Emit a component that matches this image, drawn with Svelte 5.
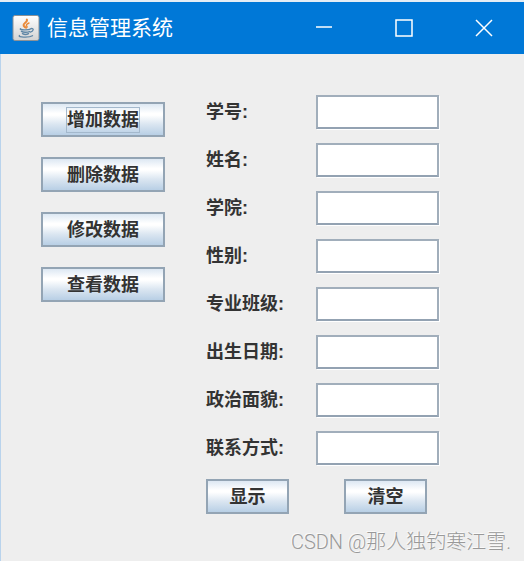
<script lang="ts">
	const actions = ['增加数据', '删除数据', '修改数据', '查看数据'];

	const fields = [
		{ id: 'number', label: '学号:' },
		{ id: 'name', label: '姓名:' },
		{ id: 'college', label: '学院:' },
		{ id: 'gender', label: '性别:' },
		{ id: 'class', label: '专业班级:' },
		{ id: 'birthday', label: '出生日期:' },
		{ id: 'politics', label: '政治面貌:' },
		{ id: 'contact', label: '联系方式:' }
	];

	let values: Record<string, string> = $state({});
	let activeAction = $state(actions[0]);

	function clear() {
		values = {};
	}
</script>

<div class="window">
	<header class="titlebar">
		<svg class="titlebar__logo" viewBox="0 0 28 28" aria-hidden="true">
			<defs>
				<linearGradient id="tile" x1="0" y1="0" x2="0" y2="1">
					<stop offset="0" stop-color="#ffffff" />
					<stop offset="1" stop-color="#d3d3d3" />
				</linearGradient>
			</defs>
			<rect x="1" y="1.5" width="26" height="25" rx="2" fill="url(#tile)" stroke="#8d9296" />
			<g fill="none" stroke="#e98a3a" stroke-linecap="round">
				<path d="M14.800 5.500c1.500 2.600-4.200 3.700-3.200 6 .4.900 1.200 1.400 1.900 2" stroke-width="2" />
				<path d="M17 9c-2.600 1.100-3.200 2-2.200 3.200.6.700.3 1.200-.4 1.700" stroke-width="1.400" />
			</g>
			<g fill="none" stroke="#5f86a5" stroke-linecap="round">
				<path d="M8.500 14.800c-1.500 1.200 8 1.600 10 .2" stroke-width="1.400" />
				<path d="M9.500 17.400c1.500 1 6 1 8 .2M10.500 19.700c1.500.8 4.500.8 6 0" stroke-width="1.500" />
				<path d="M19 14.600c3.200-.6 2.800 2.400-.6 3.600" stroke-width="1.300" />
				<path d="M7.500 21.500c-2.500 1.600 9.500 2.400 13 .2" stroke-width="1.300" />
			</g>
		</svg>
		<h1 class="titlebar__text">信息管理系统</h1>
		<div class="titlebar__controls">
			<button type="button" aria-label="最小化">
				<svg viewBox="0 0 18 18"><path d="M1 8h16" stroke-width="1.500" /></svg>
			</button>
			<button type="button" aria-label="最大化">
				<svg viewBox="0 0 18 18"><path d="M1 1h16v16H1z" stroke-width="1.500" /></svg>
			</button>
			<button type="button" aria-label="关闭">
				<svg viewBox="0 0 18 18"><path d="M1 1l16 16M17 1L1 17" stroke-width="1.500" /></svg>
			</button>
		</div>
	</header>

	<main class="content">
		<nav class="actions">
			{#each actions as action}
				<button
					type="button"
					class="btn"
					class:btn--active={action === activeAction}
					onclick={() => (activeAction = action)}
				>
					<span>{action}</span>
				</button>
			{/each}
		</nav>

		<form class="form" onsubmit={(e) => e.preventDefault()}>
			{#each fields as field}
				<div class="row">
					<label for={field.id}>{field.label}</label>
					<input id={field.id} type="text" autocomplete="off" bind:value={values[field.id]} />
				</div>
			{/each}
			<div class="form__buttons">
				<button type="submit" class="btn"><span>显示</span></button>
				<button type="button" class="btn" onclick={clear}><span>清空</span></button>
			</div>
		</form>
	</main>

	<p class="watermark">CSDN @那人独钓寒江雪.</p>
</div>

<style>
	:global(body) {
		margin: 0;
		background: #eeeeee;
	}

	.window {
		position: relative;
		box-sizing: border-box;
		min-height: 100vh;
		border-top: 2px solid #e4edf5;
		background: #eeeeee;
		color: #333333;
		font-family: 'Liberation Sans', 'Noto Sans CJK SC', sans-serif;
	}

	.titlebar {
		display: flex;
		align-items: center;
		height: 52px;
		padding-left: 12px;
		background: #0078d7;
		color: #ffffff;
	}

	.titlebar__logo {
		width: 28px;
		height: 28px;
	}

	.titlebar__text {
		margin: 0 0 0 7px;
		font-size: 21px;
		font-weight: 400;
		line-height: 28px;
		white-space: nowrap;
	}

	.titlebar__controls {
		display: flex;
		align-self: stretch;
		margin-left: auto;
	}

	.titlebar__controls button {
		display: flex;
		align-items: center;
		justify-content: center;
		width: 80px;
		padding: 0;
		border: 0;
		background: transparent;
	}

	.titlebar__controls button:hover {
		background: #1a86db;
	}

	.titlebar__controls svg {
		width: 18px;
		height: 18px;
		fill: none;
		stroke: #ffffff;
	}

	.content {
		display: flex;
		align-items: flex-start;
		gap: 41px;
		min-height: calc(100vh - 54px);
		box-sizing: border-box;
		padding: 41px 40px 46px;
		border-left: 1px solid #b9d3ec;
	}

	.actions {
		display: flex;
		flex-direction: column;
		gap: 20px;
		width: 124px;
		padding-top: 7px;
	}

	.btn {
		display: flex;
		align-items: center;
		justify-content: center;
		box-sizing: border-box;
		height: 35px;
		padding: 0;
		border: 2px solid #93a4b4;
		background: linear-gradient(#dde8f3, #ffffff 30%, #ffffff 36%, #dbe6f1 65%, #b8cfe5);
		color: #333333;
		font: inherit;
		font-size: 18px;
		font-weight: 700;
		line-height: 24px;
		white-space: nowrap;
	}

	.btn--active span {
		outline: 1px solid #a3b8cc;
	}

	.form {
		display: flex;
		flex-direction: column;
		gap: 14px;
	}

	.row {
		display: flex;
		align-items: center;
	}

	.row label {
		width: 110px;
		font-size: 18px;
		font-weight: 700;
		line-height: 24px;
	}

	.row input {
		box-sizing: border-box;
		width: 123px;
		height: 34px;
		padding: 0 4px;
		border: 2px solid #a1aebb;
		border-bottom-color: #93a2b2;
		border-radius: 0;
		outline: 0;
		background: #ffffff;
		box-shadow: 1px 1px #ffffff;
		color: #333333;
		font: inherit;
		font-size: 18px;
	}

	.form__buttons {
		display: flex;
		gap: 55px;
	}

	.form__buttons .btn {
		width: 83px;
	}

	.watermark {
		position: absolute;
		right: 13px;
		bottom: 5px;
		margin: 0;
		color: #999999;
		font-family: Roboto, 'Noto Sans CJK SC', sans-serif;
		font-size: 20px;
		font-weight: 300;
		line-height: 28px;
		text-shadow: -1px -1px #fafafa;
		white-space: nowrap;
		pointer-events: none;
	}
</style>
